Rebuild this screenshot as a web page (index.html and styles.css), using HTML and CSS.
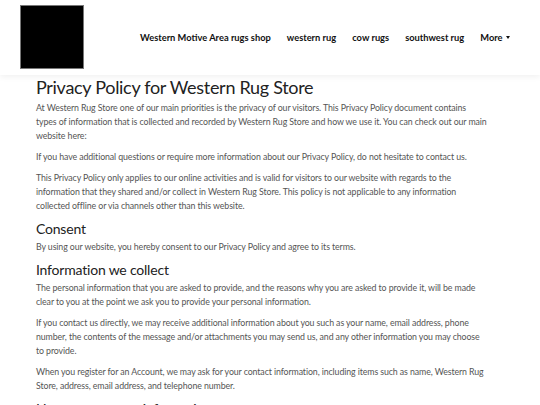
FILE: index.html
```html
<!DOCTYPE html>
<html lang="en">
<head>
    <meta charset="UTF-8">
    <meta name="viewport" content="width=device-width, initial-scale=1.0">
    <title>Privacy Policy for Western Rug Store</title>
    <link rel="stylesheet" href="styles.css">
</head>
<body>
    <header class="site-header">
        <a class="logo" href="#"></a>
        <nav class="main-nav">
            <a href="#">Western Motive Area rugs shop</a>
            <a href="#">western rug</a>
            <a href="#">cow rugs</a>
            <a href="#">southwest rug</a>
            <a href="#" class="more">More <span class="caret"></span></a>
        </nav>
    </header>

    <main class="policy">
        <h1>Privacy Policy for Western Rug Store</h1>
        <p>At Western Rug Store one of our main priorities is the privacy of our visitors. This Privacy Policy document contains types of information that is collected and recorded by Western Rug Store and how we use it. You can check out our main website here:</p>
        <p>If you have additional questions or require more information about our Privacy Policy, do not hesitate to contact us.</p>
        <p>This Privacy Policy only applies to our online activities and is valid for visitors to our website with regards to the information that they shared and/or collect in Western Rug Store. This policy is not applicable to any information collected offline or via channels other than this website.</p>

        <h2>Consent</h2>
        <p>By using our website, you hereby consent to our Privacy Policy and agree to its terms.</p>

        <h2>Information we collect</h2>
        <p>The personal information that you are asked to provide, and the reasons why you are asked to provide it, will be made clear to you at the point we ask you to provide your personal information.</p>
        <p>If you contact us directly, we may receive additional information about you such as your name, email address, phone number, the contents of the message and/or attachments you may send us, and any other information you may choose to provide.</p>
        <p>When you register for an Account, we may ask for your contact information, including items such as name, Western Rug Store, address, email address, and telephone number.</p>

        <h2>How we use your information</h2>
        <p>We use the information we collect in various ways, including to:</p>
    </main>
</body>
</html>
```

FILE: styles.css
```css
body {
    font-family: Lato, 'Noto Sans', sans-serif;
    background-color: #fff;
    color: #555;
    margin: 0;
    padding: 0;
}

.site-header {
    display: flex;
    align-items: center;
    height: 75px;
    padding: 0 20px;
    background-color: #fff;
    box-shadow: 0 2px 6px rgba(0, 0, 0, 0.06);
}

.logo {
    display: block;
    width: 62px;
    height: 62px;
    background-color: #000;
    border: 1px solid #777;
    margin-top: -1px;
}

.main-nav {
    display: flex;
    align-items: center;
    margin-left: 56px;
    gap: 16px;
}

.main-nav a {
    font-size: 9.3px;
    font-weight: 700;
    color: #111;
    text-decoration: none;
    white-space: nowrap;
}

.caret {
    display: inline-block;
    width: 0;
    height: 0;
    margin-left: 1px;
    vertical-align: 2px;
    border-top: 3px solid #111;
    border-left: 2.5px solid transparent;
    border-right: 2.5px solid transparent;
}

.policy {
    padding: 0 52px 0 36px;
}

.policy h1 {
    font-size: 18px;
    font-weight: 400;
    letter-spacing: -0.3px;
    color: #222;
    margin: 1px 0 3px;
}

.policy h2 {
    font-size: 14px;
    font-weight: 400;
    letter-spacing: -0.2px;
    color: #222;
    margin: 5px 0 3px;
}

.policy p {
    font-size: 8.8px;
    letter-spacing: -0.1px;
    line-height: 14px;
    margin: 0 0 7px;
}
```
